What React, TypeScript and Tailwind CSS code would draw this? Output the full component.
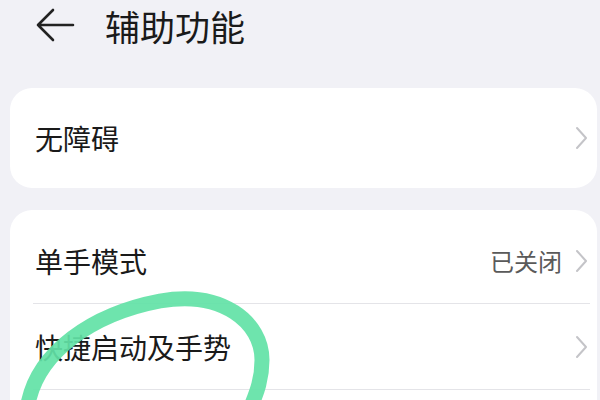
import React from 'react';

const font = { fontFamily: '"Noto Sans CJK SC", "Noto Sans", sans-serif' };

function Chevron() {
  return (
    <svg width="14" height="24" viewBox="0 0 14 24" className="shrink-0">
      <path d="M3 2 L12 12 L3 22" fill="none" stroke="#c4c4c8" strokeWidth="2" strokeLinecap="round" strokeLinejoin="round" />
    </svg>
  );
}

function Row({ label, value, divider }: { label: string; value?: string; divider?: boolean }) {
  return (
    <div className="flex flex-col">
      <div className="flex items-center h-[85px] pl-[25px] pr-[9px]">
        <span className="flex-1 text-[28px] text-[#1a1a1a] leading-none">{label}</span>
        {value && <span className="text-[24px] text-[#5a5a5a] leading-none mr-[12px]">{value}</span>}
        <Chevron />
      </div>
      {divider && <div className="h-px bg-[#e4e4e8] ml-[23px] mr-[7px]" />}
    </div>
  );
}

export default function App() {
  return (
    <div className="relative w-[600px] h-[400px] overflow-hidden bg-[#f1f1f6]" style={font}>
      {/* Header */}
      <div className="flex items-center h-[50px] pl-[36px]">
        <svg width="40" height="36" viewBox="0 0 40 36" className="shrink-0">
          <path d="M17 3 L2 18 L17 33 M2 18 L37 18" fill="none" stroke="#222" strokeWidth="2.6" strokeLinecap="round" strokeLinejoin="round" />
        </svg>
        <h1 className="ml-[29px] text-[35px] text-[#1a1a1a] leading-none">辅助功能</h1>
      </div>

      <div className="flex flex-col gap-[22px] pl-[10px] pr-[3px] pt-[38px]">
        <div className="bg-white rounded-[22px] flex items-center h-[100px] pl-[25px] pr-[9px]">
          <span className="flex-1 text-[28px] text-[#1a1a1a] leading-none">无障碍</span>
          <Chevron />
        </div>

        <div className="bg-white rounded-[22px] pt-[8px] h-[260px]">
          <Row label="单手模式" value="已关闭" divider />
          <Row label="快捷启动及手势" divider />
        </div>
      </div>

      {/* Hand-drawn annotation */}
      <svg className="absolute left-0 top-0 pointer-events-none" width="600" height="400" viewBox="0 0 600 400">
        <path
          d="M28 404 C38 352, 92 314, 160 301 C222 290, 262 322, 262 360 C262 380, 256 394, 252 404"
          fill="none"
          stroke="#62e2a6"
          strokeOpacity="0.92"
          strokeWidth="15"
          strokeLinecap="round"
        />
      </svg>
    </div>
  );
}
